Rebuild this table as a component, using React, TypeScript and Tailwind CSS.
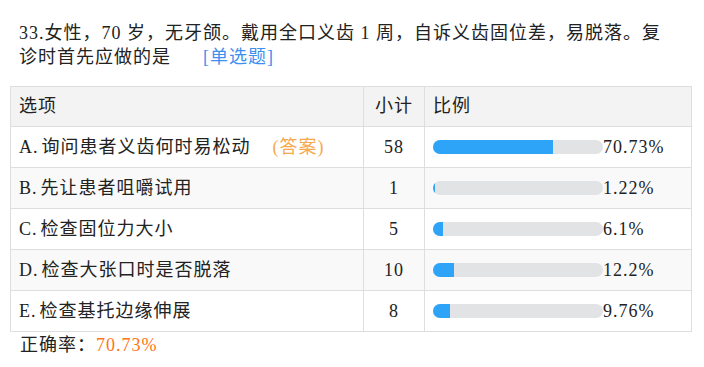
import React from "react";

type Row = { label: string; count: number; pct: number; text: string; answer?: boolean };

const rows: Row[] = [
  { label: "A.", text: "询问患者义齿何时易松动", count: 58, pct: 70.73, answer: true },
  { label: "B.", text: "先让患者咀嚼试用", count: 1, pct: 1.22 },
  { label: "C.", text: "检查固位力大小", count: 5, pct: 6.1 },
  { label: "D.", text: "检查大张口时是否脱落", count: 10, pct: 12.2 },
  { label: "E.", text: "检查基托边缘伸展", count: 8, pct: 9.76 },
];

const font = "font-['Liberation_Serif','Noto_Sans_CJK_SC',serif]";

export default function App() {
  return (
    <div className={`w-[704px] h-[367px] bg-white text-[#222] ${font} text-[18px] tracking-[1px] overflow-hidden`}>
      <div className="pt-[21px] pl-[19px] leading-[24px]">
        33.女性，70 岁，无牙颌。戴用全口义齿 1 周，自诉义齿固位差，易脱落。复
        <br />
        诊时首先应做的是
        <span className="ml-[32px] text-[#3d8ff0]">[单选题]</span>
      </div>

      <table className="mt-[17px] ml-[10px] w-[682px] border-collapse border border-[#dedede] table-fixed">
        <colgroup>
          <col className="w-[353px]" />
          <col className="w-[61px]" />
          <col />
        </colgroup>
        <thead>
          <tr className="h-[40px] bg-[#f3f3f3]">
            <th className="border border-[#dedede] pl-2 text-left font-normal">选项</th>
            <th className="border border-[#dedede] text-center font-normal">小计</th>
            <th className="border border-[#dedede] pl-2 text-left font-normal">比例</th>
          </tr>
        </thead>
        <tbody>
          {rows.map((r, i) => (
            <tr key={r.label} className={`h-[41px] ${i % 2 === 1 ? "bg-[#f9f9f9]" : "bg-white"}`}>
              <td className="border border-[#dedede] pl-2 whitespace-nowrap">
                <span className="mr-[3px]">{r.label}</span>
                {r.text}
                {r.answer && <span className="ml-[22px] text-[#f7a94e]">(答案)</span>}
              </td>
              <td className="border border-[#dedede] text-center">{r.count}</td>
              <td className="border border-[#dedede] pl-2">
                <div className="flex items-center">
                  <div className="w-[170px] h-[14px] rounded-full bg-[#e2e3e5] overflow-hidden">
                    <div className="h-full bg-[#2ea4f8]" style={{ width: `${r.pct}%` }} />
                  </div>
                  <span className="leading-none">{r.pct}%</span>
                </div>
              </td>
            </tr>
          ))}
        </tbody>
      </table>

      <div className="pl-[20px] pt-[1px] leading-[24px]">
        正确率：<span className="text-[#ff7417]">70.73%</span>
      </div>
    </div>
  );
}
